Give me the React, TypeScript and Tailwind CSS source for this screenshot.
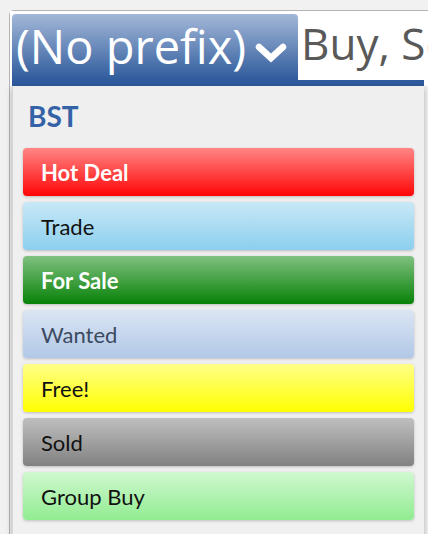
import React from "react";

type Prefix = {
  label: string;
  bg: string;
  text: string;
};

const prefixes: Prefix[] = [
  { label: "Hot Deal", bg: "from-[#ff8585] to-[#ff0606]", text: "text-white font-bold" },
  { label: "Trade", bg: "from-[#c8e8f6] to-[#8ccfee]", text: "text-[#111]" },
  { label: "For Sale", bg: "from-[#80c180] to-[#078207]", text: "text-white font-bold" },
  { label: "Wanted", bg: "from-[#dbe5f3] to-[#b1c8e7]", text: "text-[#3c4a61]" },
  { label: "Free!", bg: "from-[#ffff88] to-[#ffff00]", text: "text-[#111]" },
  { label: "Sold", bg: "from-[#bfbfbf] to-[#818181]", text: "text-[#111]" },
  { label: "Group Buy", bg: "from-[#d0f8d0] to-[#91ec91]", text: "text-[#111]" },
];

function Chevron() {
  return (
    <svg width="32" height="22" viewBox="0 0 32 22" className="ml-[9px] mt-[19px] shrink-0">
      <polyline
        points="4,5 16,16 28,5"
        fill="none"
        stroke="white"
        strokeWidth="6.5"
        strokeLinecap="round"
        strokeLinejoin="miter"
      />
    </svg>
  );
}

export default function App() {
  return (
    <div className="w-[428px] h-[534px] overflow-hidden bg-[#f1f1f1] font-['Lato',sans-serif]">
      <div className="ml-[9px] mt-[10px] w-[440px] h-[560px] border-l border-t border-[#b4b4b4] rounded-tl-[5px]">
        {/* input row */}
        <div className="bg-white pl-[2px] pt-[3px]">
          <div className="flex h-[66px] overflow-hidden">
            <button className="flex shrink-0 items-start w-[286px] h-[66px] pl-[4px] pt-[9px] rounded-t-[4px] bg-linear-to-b/srgb from-[#a3b8d8] to-[#2f5b9c] text-white">
              <span className="text-[47px] leading-none whitespace-nowrap font-['Open_Sans',sans-serif]">(No prefix)</span>
              <Chevron />
            </button>
            <span className="shrink-0 ml-[3px] mt-[7px] text-[44px] leading-none text-[#595959] font-['Open_Sans',sans-serif] whitespace-nowrap">
              Buy, Sell
            </span>
          </div>
          <div className="w-[412px] h-[6px] bg-[#2f5b9d]" />
        </div>

        {/* dropdown */}
        <div className="ml-[2px] w-[412px] bg-linear-to-b/srgb from-[#efefef] to-[#f1f1f1] border-l border-[#d6d6d6] shadow-[0_2px_6px_rgba(0,0,0,0.28)] pb-[20px]">
          <div className="pl-[15px] pt-[16px] h-[62px] text-[28px] leading-none font-bold text-[#3462a6]">BST</div>
          <div className="flex flex-col gap-[6px] px-[10px]">
            {prefixes.map((p) => (
              <div
                key={p.label}
                className={`flex items-center h-[48px] pl-[18px] rounded-[4px] bg-linear-to-b/srgb ${p.bg} shadow-[0_1px_3px_rgba(0,0,0,0.22)] text-[22px] ${p.text}`}
              >
                {p.label}
              </div>
            ))}
          </div>
        </div>
      </div>
    </div>
  );
}
